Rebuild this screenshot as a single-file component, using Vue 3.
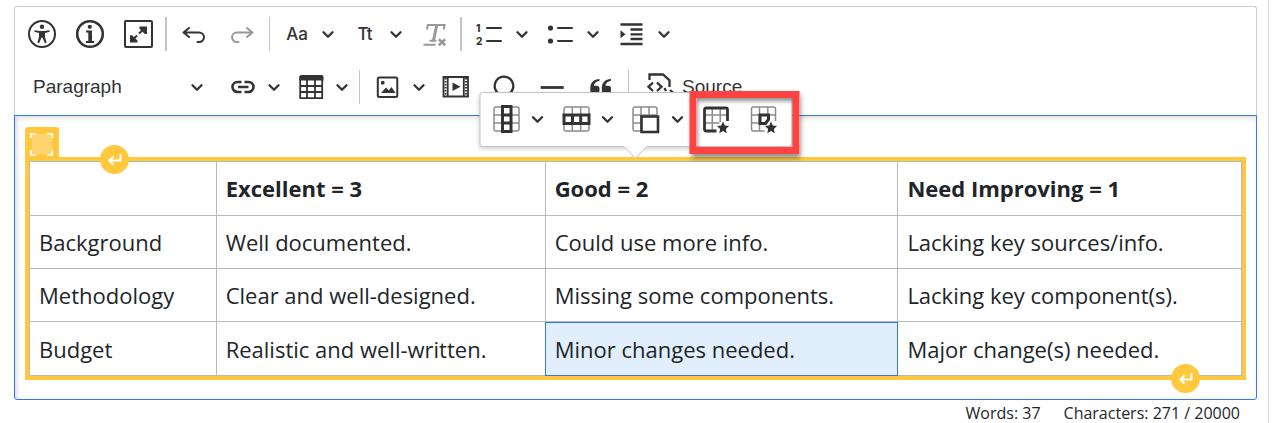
<script setup>
const headings = ['', 'Excellent = 3', 'Good = 2', 'Need Improving = 1']
const rows = [
  ['Background', 'Well documented.', 'Could use more info.', 'Lacking key sources/info.'],
  ['Methodology', 'Clear and well-designed.', 'Missing some components.', 'Lacking key component(s).'],
  ['Budget', 'Realistic and well-written.', 'Minor changes needed.', 'Major change(s) needed.'],
]
const isSelected = (r, c) => r === 2 && c === 2
const words = 37
const characters = 271
const limit = 20000
</script>

<template>
  <main class="page">
    <svg class="defs" aria-hidden="true">
      <symbol id="i-caret" viewBox="0 0 12 12"><path d="M1.5 4.2 6 8.700l4.500-4.500" fill="none" stroke="#333" stroke-width="2.300" stroke-linecap="round" stroke-linejoin="round" /></symbol>
      <symbol id="i-star" viewBox="0 0 14 14"><path d="M7 .6 8.900 4.900l4.600.5-3.400 3.100.9 4.600-4-2.300-4 2.300.9-4.600L.5 5.400l4.600-.5z" fill="#333" /></symbol>
      <symbol id="i-grid" viewBox="0 0 32 32"><path d="M5.500 4h21a2 2 0 0 1 2 2v20a2 2 0 0 1-2 2h-21a2 2 0 0 1-2-2V6a2 2 0 0 1 2-2zM11.800 4v24M20.200 4v24M3.500 12h25M3.500 20h25" fill="none" stroke="#8c8c8c" stroke-width="1.500" /></symbol>
      <symbol id="i-return" viewBox="0 0 16 12"><path d="M13.500 1v5.500H3M6 3 2.200 6.500 6 10" fill="none" stroke="#fff" stroke-width="2" stroke-linecap="round" stroke-linejoin="round" /></symbol>
    </svg>

    <div class="editor">
      <div class="toolbar" role="toolbar" aria-label="Editor toolbar">
        <div class="row">
          <button class="btn" aria-label="Accessibility checker">
            <svg class="icon" viewBox="0 0 32 32"><circle cx="16" cy="16" r="13" class="s2" /><circle cx="16" cy="8.700" r="2.200" class="f" /><path class="f" d="M8.600 12.200 14 13h4l5.400-.8.300 1.500-4.700 1.200v4.100l1.600 5.600-1.700.6-2.500-5.700h-.8l-2.500 5.700-1.700-.6 1.600-5.600v-4.100l-4.700-1.200z" /></svg>
          </button>
          <button class="btn" aria-label="Information">
            <svg class="icon" viewBox="0 0 32 32"><circle cx="16" cy="16" r="12.800" class="s2" stroke-width="2.600" /><circle cx="15.800" cy="8.800" r="2.100" class="f" /><path class="f" d="M12 12.500h6V23h2v2h-8v-2h2.300v-8.500H12z" /></svg>
          </button>
          <button class="btn" aria-label="Full screen">
            <svg class="icon" viewBox="0 0 32 32"><rect x="3" y="3" width="27" height="26" rx="1" class="s2" /><path class="s2" d="m17 15.500 6-5.500M15 17.500 10 22.500" /><path class="f" d="M17.500 8.500h7.500V16h-2.200l-5.300-5.200zM8 17.200h2l5.500 5.300v2H8z" /></svg>
          </button>
          <span class="sep wide"></span>
          <button class="btn" aria-label="Undo">
            <svg class="icon" viewBox="0 0 32 32"><path class="s2 round" d="M5.500 14.500H21a5 4.800 0 0 1 0 9.600h-1.500M11 10l-5.500 4.500L11 19" /></svg>
          </button>
          <button class="btn off" aria-label="Redo" disabled>
            <svg class="icon" viewBox="0 0 32 32"><path class="s2 round" d="M26.500 14.500H11a5 4.800 0 0 0 0 9.600h1.500M21 10l5.500 4.500L21 19" /></svg>
          </button>
          <span class="sep"></span>
          <button class="drop" aria-label="Font family"><span class="main glyph">Aa</span><svg class="caret"><use href="#i-caret" /></svg></button>
          <button class="drop" aria-label="Font size"><span class="main glyph">Tt</span><svg class="caret"><use href="#i-caret" /></svg></button>
          <button class="btn off" aria-label="Remove format" disabled>
            <svg class="icon" viewBox="0 0 32 32"><path class="s2" d="M10 11.500l.8-4.500H27.500l-.8 4.500" /><path class="s2" stroke-width="3" d="m19.800 7-3.300 15.500" /><path class="s2" d="M12.500 22.700h7M6.500 26.700h12" /><path class="s2" stroke-width="2.600" d="m21.800 21.300 6.400 6M28.200 21.300l-6.400 6" /></svg>
          </button>
          <span class="sep wide"></span>
          <button class="drop split" aria-label="Numbered list">
            <span class="main"><svg class="icon" viewBox="0 0 32 32"><path class="s2 round" d="M14 10h14M14 23h14" /><text x="3" y="13.500" class="digit">1</text><text x="3" y="27" class="digit">2</text></svg></span>
            <svg class="caret"><use href="#i-caret" /></svg>
          </button>
          <button class="drop split" aria-label="Bulleted list">
            <span class="main"><svg class="icon" viewBox="0 0 32 32"><path class="s2 round" d="M14 10h14M14 23h14" /><circle cx="6.500" cy="10" r="2.600" class="f" /><circle cx="6.500" cy="23" r="2.600" class="f" /></svg></span>
            <svg class="caret"><use href="#i-caret" /></svg>
          </button>
          <button class="drop split" aria-label="Increase indent">
            <span class="main"><svg class="icon" viewBox="0 0 32 32"><path class="s2" stroke-width="2.300" d="M5.500 6.500h22M15.500 11.500h12M15.500 16.300h12M15.500 21h12M5.500 26h22" /><path class="f" d="m5.500 12.300 5 4-5 4z" /></svg></span>
            <svg class="caret"><use href="#i-caret" /></svg>
          </button>
        </div>

        <div class="row lower">
          <div class="heading">
            <select aria-label="Heading">
              <option>Paragraph</option>
            </select>
            <svg class="caret"><use href="#i-caret" /></svg>
          </div>
          <button class="drop" aria-label="Link">
            <span class="main"><svg class="icon" viewBox="0 0 32 32"><path class="s2" stroke-width="2.600" d="M14.500 11H10.500a5 5 0 0 0 0 10h4M17.500 11h4a5 5 0 0 1 0 10h-4M11 16h10.500" /></svg></span>
            <svg class="caret"><use href="#i-caret" /></svg>
          </button>
          <button class="drop" aria-label="Insert table">
            <span class="main"><svg class="icon" viewBox="0 0 32 32"><path class="s2" d="M5.200 6h22v21.200h-22zM12 9v18M20 9v18M5 15h22M5 21h22" stroke-width="1.800" stroke-linejoin="round" /><path class="f" d="M6 4h20.500a2 2 0 0 1 2 2v3.500h-24V6A2 2 0 0 1 6 4z" /></svg></span>
            <svg class="caret"><use href="#i-caret" /></svg>
          </button>
          <span class="sep"></span>
          <button class="drop" aria-label="Insert image">
            <span class="main"><svg class="icon" viewBox="0 0 32 32"><rect x="5.800" y="6.500" width="19.500" height="19.500" rx="1.500" class="s2" /><rect x="9" y="10" width="3.500" height="3.500" rx="1" class="f" /><path class="f" d="m9 22 5-5.500 2.800 3 2.700-3.500 4 6z" /></svg></span>
            <svg class="caret"><use href="#i-caret" /></svg>
          </button>
          <button class="btn" aria-label="Insert media">
            <svg class="icon" viewBox="0 0 32 32"><path class="s2" stroke-width="1.800" d="M3.500 6h24.500v19.500H3.500zM7.700 6v19.500M23.800 6v19.500" /><path class="s2" stroke-width="2" stroke-dasharray="1.500 1.500" d="M5.500 7v18M26 7v18" /><path class="f" d="m12.500 11.500 8 4.300-8 4.300z" /></svg>
          </button>
          <button class="btn" aria-label="Special characters">
            <svg class="icon" viewBox="0 0 32 32"><path class="s2" stroke-width="2.300" d="M7 26h5.500v-2.500a9.300 9.300 0 1 1 7 0V26H25" /></svg>
          </button>
          <button class="btn" aria-label="Horizontal line">
            <svg class="icon" viewBox="0 0 32 32"><path class="s2" stroke-width="2.800" d="M4.700 16.500h23" /></svg>
          </button>
          <button class="btn" aria-label="Block quote">
            <svg class="icon" viewBox="0 0 32 32"><path class="f" d="M15.500 8v1.800c-3.600.5-5.200 2.500-5.600 5h2.600a3 3 0 0 1 3 3v1.500a3 3 0 0 1-3 3H9.300a3 3 0 0 1-3-3v-2C6.300 12 9.500 8 15.500 8zM27 8v1.800c-3.600.5-5.200 2.500-5.600 5H24a3 3 0 0 1 3 3v1.500a3 3 0 0 1-3 3h-3.200a3 3 0 0 1-3-3v-2C17.800 12 21 8 27 8z" /></svg>
          </button>
          <span class="sep"></span>
          <button class="source">
            <svg class="icon" viewBox="0 0 32 32"><path class="s2" stroke-width="2.300" d="M5.500 9V3.500H19l6.500 5.800V16M9 11.500 4.500 15.800 9 20M13 11.500l4.500 4.300L13 20M20.500 17l1.500 3M26 19l4 3.500v4h-8" /></svg>
            <span>Source</span>
          </button>
        </div>
      </div>

      <section class="editable" aria-label="Editing area">
        <figure class="widget">
          <span class="handle">
            <svg viewBox="0 0 34 34"><rect x="7" y="7" width="20" height="20" fill="#ffd470" /><path d="M5.800 11V6.700H11M22 6.700h5.300V11M27.300 23v5H22M11 28H5.800v-5" fill="none" stroke="#fff" stroke-width="1.600" /></svg>
          </span>
          <button class="para before" aria-label="Insert paragraph before block"><svg><use href="#i-return" /></svg></button>
          <table>
            <colgroup><col class="c1" /><col class="c2" /><col class="c3" /><col class="c4" /></colgroup>
            <thead>
              <tr><th v-for="(h, i) in headings" :key="i" scope="col">{{ h }}</th></tr>
            </thead>
            <tbody>
              <tr v-for="(row, r) in rows" :key="r">
                <td v-for="(cell, c) in row" :key="c" :class="{ selected: isSelected(r, c) }">{{ cell }}</td>
              </tr>
            </tbody>
          </table>
          <button class="para after" aria-label="Insert paragraph after block"><svg><use href="#i-return" /></svg></button>
        </figure>
      </section>

      <div class="balloon" role="toolbar" aria-label="Table toolbar">
        <button class="drop" aria-label="Column">
          <span class="main"><svg class="icon" viewBox="0 0 32 32"><use href="#i-grid" /><path class="s2" stroke-width="3" d="M12 3.500h8.500V28.500H12zM12 12h8.500M12 20h8.500" /></svg></span>
          <svg class="caret"><use href="#i-caret" /></svg>
        </button>
        <button class="drop" aria-label="Row">
          <span class="main"><svg class="icon" viewBox="0 0 32 32"><use href="#i-grid" /><path class="s2" stroke-width="3" d="M3.500 12h25v8.500h-25zM12 12v8.500M20.200 12v8.500" /></svg></span>
          <svg class="caret"><use href="#i-caret" /></svg>
        </button>
        <button class="drop" aria-label="Merge cells">
          <span class="main"><svg class="icon" viewBox="0 0 32 32"><path d="M10 28H4.500a2 2 0 0 1-2-2V6a2 2 0 0 1 2-2h20a2 2 0 0 1 2 2v6M10.500 4v24M18.500 4v9M2.500 12h24M2.500 20h8" fill="none" stroke="#8c8c8c" stroke-width="1.500" /><rect x="11" y="13.500" width="16.500" height="15.500" fill="#fff" stroke="#333" stroke-width="2.600" /></svg></span>
          <svg class="caret"><use href="#i-caret" /></svg>
        </button>
        <button class="btn" aria-label="Table properties">
          <svg class="icon" viewBox="0 0 32 32"><path d="M11.800 4v24M19.700 4v15M4 12h23M4 20h15" fill="none" stroke="#8c8c8c" stroke-width="1.500" /><path class="s2" stroke-width="2.800" d="M16 28H5.500A1.500 1.500 0 0 1 4 26.500v-20A1.500 1.500 0 0 1 5.500 5h20A1.500 1.500 0 0 1 27 6.500V18" /><use href="#i-star" x="16" y="18" width="13" height="13" /></svg>
        </button>
        <button class="btn" aria-label="Cell properties">
          <svg class="icon" viewBox="0 0 32 32"><path d="M16 28H5a2 2 0 0 1-2-2V6a2 2 0 0 1 2-2h20a2 2 0 0 1 2 2v12M11 4v24M19.300 4v10M3 12h24M3 20h13" fill="none" stroke="#8c8c8c" stroke-width="1.500" /><path class="s2" stroke-width="3" d="M15 20.500h-3.500v-8.500h8.500v4.500l-3 4z" /><use href="#i-star" x="16" y="18" width="13" height="13" /></svg>
        </button>
        <svg class="tip" viewBox="0 0 24 14"><path d="M0 0h24L12 12.500z" fill="#fff" /><path d="M1 .5 12 12.500 23 .5" fill="none" stroke="#c4c4c4" /></svg>
        <span class="highlight"></span>
      </div>
    </div>

    <footer class="count">
      <span>Words: {{ words }}</span>
      <span>Characters: {{ characters }} / {{ limit }}</span>
    </footer>
  </main>
</template>

<style>
body {
  background: #fff;
}
</style>

<style scoped>
* {
  box-sizing: border-box;
}
.page {
  min-height: 100vh;
  margin-right: 14px;
  padding: 6px 11px 0 14px;
  border-right: 1px solid #dcdee3;
  color: #212529;
  font-family: "Open Sans", "Noto Sans", sans-serif;
}
.defs {
  position: absolute;
  width: 0;
  height: 0;
}
.editor {
  position: relative;
}
.toolbar {
  display: flex;
  flex-direction: column;
  gap: 7px;
  padding: 4px 3px 5px;
  border: 1px solid #ccced1;
  border-bottom: 0;
  border-radius: 3px 3px 0 0;
}
.row {
  display: flex;
  align-items: center;
}
.sep {
  width: 1px;
  height: 34px;
  margin: 0 3px;
  background: #c4c4c8;
}
.sep.wide {
  width: 2px;
}
.lower .sep {
  margin: 0 4px;
}
button,
select {
  margin: 0;
  padding: 0;
  border: 0;
  background: none;
  color: #333;
  font: 19px/24px "Liberation Sans", Arial, sans-serif;
}
.btn,
.main {
  display: flex;
  align-items: center;
  justify-content: center;
  width: 48px;
  height: 46px;
}
.off {
  color: #999;
}
.drop {
  display: flex;
  align-items: center;
  gap: 1px;
  width: 68px;
}
.drop.split {
  gap: 3px;
  width: 71px;
}
.glyph {
  font: 500 17px/24px Inter, sans-serif;
}
.icon {
  flex: none;
  width: 32px;
  height: 32px;
}
.caret {
  flex: none;
  width: 12px;
  height: 12px;
}
.s2 {
  fill: none;
  stroke: currentColor;
}
.s2:not([stroke-width]) {
  stroke-width: 2;
}
.round {
  stroke-linecap: round;
  stroke-linejoin: round;
}
.f {
  fill: currentColor;
}
.digit {
  fill: currentColor;
  font: 800 10px Inter, sans-serif;
}
.heading {
  display: grid;
  align-items: center;
  width: 201px;
}
.heading > * {
  grid-area: 1 / 1;
}
.heading select {
  appearance: none;
  height: 46px;
  padding: 0 32px 0 15px;
}
.heading .caret {
  justify-self: end;
  margin-right: 16px;
  pointer-events: none;
}
.source {
  display: flex;
  align-items: center;
  gap: 6px;
  height: 46px;
  padding: 0 11px;
}
.editable {
  padding: 41px 10px 19px;
  border: 1px solid #3577e8;
  border-radius: 0 0 3px 3px;
  box-shadow: inset 2px 2px 5px rgba(0, 0, 0, 0.14);
}
.widget {
  position: relative;
  margin: 0;
  border: 4px solid #ffc83d;
}
.handle {
  position: absolute;
  left: -4px;
  top: -34px;
  width: 34px;
  height: 34px;
  border-radius: 3px 3px 0 0;
  background: #ffc83d;
}
.handle svg {
  display: block;
}
.para {
  position: absolute;
  display: flex;
  align-items: center;
  justify-content: center;
  width: 29px;
  height: 29px;
  border-radius: 50%;
  background: #ffc83d;
}
.para svg {
  width: 16px;
  height: 12px;
}
.before {
  left: 71px;
  top: -16px;
}
.after {
  right: 42px;
  bottom: -17px;
}
table {
  width: 100%;
  border-collapse: collapse;
  table-layout: fixed;
  font-size: 22px;
  line-height: 30px;
}
.c1 {
  width: 15.4%;
}
.c2 {
  width: 27.15%;
}
.c3 {
  width: 29.1%;
}
.c4 {
  width: 28.35%;
}
th,
td {
  height: 53px;
  padding: 0 9px;
  border: 1px solid #b8b8b8;
  text-align: left;
  white-space: nowrap;
}
th {
  height: 54px;
  padding-bottom: 2px;
}
tr:last-child td {
  height: 54px;
}
.selected {
  background: #e1eefb;
  outline: 1px solid #3577e8;
  outline-offset: -1px;
}
.balloon {
  position: absolute;
  top: 86px;
  left: 50%;
  display: flex;
  align-items: center;
  padding: 3px 3px 4px 2px;
  border: 1px solid #c4c4c4;
  border-radius: 3px;
  background: #fff;
  box-shadow: 0 2px 4px rgba(0, 0, 0, 0.18);
  transform: translateX(-50%);
}
.balloon .drop {
  width: 70px;
}
.tip {
  position: absolute;
  left: 50%;
  top: 100%;
  width: 24px;
  height: 14px;
  margin-left: -12px;
}
.highlight {
  position: absolute;
  right: -8px;
  top: -2px;
  width: 110px;
  height: 63px;
  border: 7px solid #ff4343;
  box-shadow: 1px 4px 5px rgba(0, 0, 0, 0.45), inset 1px 3px 4px rgba(0, 0, 0, 0.45);
  pointer-events: none;
}
.count {
  display: flex;
  justify-content: flex-end;
  gap: 23px;
  padding: 3px 17px 0 0;
  font-size: 16px;
  line-height: 20px;
}
</style>
